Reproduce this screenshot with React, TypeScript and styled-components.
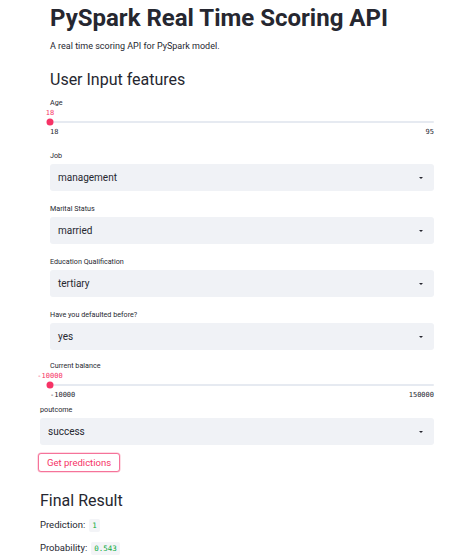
import styled, { createGlobalStyle } from "styled-components";

const primary = "#f63366";
const textColor = "#262730";

const GlobalStyle = createGlobalStyle`
    body {
        margin: 0;
        background: #ffffff;
        color: ${textColor};
        font-family: Roboto, "Noto Sans", sans-serif;
    }
`;

const Page = styled.div`
    padding: 4px 26px 0 40px;
`;

const Inner = styled.div`
    padding-left: 10px;
`;

const Title = styled.h1`
    margin: 0;
    font-size: 24px;
    line-height: 28px;
    font-weight: 700;
`;

const Subtitle = styled.p`
    margin: 7px 0 0;
    font-size: 9px;
    line-height: 14px;
`;

const SectionTitle = styled.h2<{ $top: number }>`
    margin: ${(p) => p.$top}px 0 0;
    font-size: 16px;
    line-height: 22px;
    font-weight: 400;
`;

const Label = styled.div`
    font-size: 7.2px;
    line-height: 12px;
`;

const SliderBlock = styled.div<{ $top: number }>`
    margin-top: ${(p) => p.$top}px;
`;

const ValueRow = styled.div`
    position: relative;
    height: 9px;
`;

const ThumbValue = styled.span`
    position: absolute;
    top: 0;
    transform: translateX(-50%);
    font-family: "DejaVu Sans Mono", monospace;
    font-size: 7px;
    line-height: 9px;
    color: ${primary};
    white-space: nowrap;
`;

const Track = styled.div`
    position: relative;
    height: 8px;
    display: flex;
    align-items: center;
    &::before {
        content: "";
        flex: 1;
        height: 2px;
        border-radius: 1px;
        background: #e6eaf1;
    }
`;

const Thumb = styled.span`
    position: absolute;
    top: 50%;
    width: 7px;
    height: 7px;
    border-radius: 50%;
    background: ${primary};
    transform: translate(-50%, -50%);
`;

const Ticks = styled.div`
    display: flex;
    justify-content: space-between;
    font-family: "DejaVu Sans Mono", monospace;
    font-size: 7px;
    line-height: 12px;
    color: ${textColor};
`;

const Field = styled.div<{ $top: number }>`
    margin-top: ${(p) => p.$top}px;
`;

const Select = styled.div`
    margin-top: 2px;
    height: 27px;
    box-sizing: border-box;
    padding: 0 11px 0 8px;
    display: flex;
    align-items: center;
    justify-content: space-between;
    background: #f0f2f6;
    border-radius: 3px;
    font-size: 10px;
`;

const Caret = styled.span`
    width: 0;
    height: 0;
    border-left: 2px solid transparent;
    border-right: 2px solid transparent;
    border-top: 2.5px solid ${textColor};
`;

const Button = styled.button`
    margin-top: 8px;
    margin-left: -2px;
    height: 19px;
    padding: 0 8px;
    background: #ffffff;
    border: 1.5px solid #f5739a;
    border-radius: 3px;
    box-shadow: 0 0 0 0.5px rgba(246, 51, 102, 0.35);
    color: ${primary};
    font-family: inherit;
    font-size: 9.5px;
    line-height: 16px;
`;

const ResultRow = styled.div<{ $top: number }>`
    margin-top: ${(p) => p.$top}px;
    display: flex;
    align-items: center;
    gap: 4px;
    font-size: 9.5px;
    line-height: 14px;
`;

const Code = styled.code`
    padding: 1px 3px;
    border-radius: 2px;
    background: #f3f4f7;
    color: #09ab3b;
    font-family: "DejaVu Sans Mono", monospace;
    font-size: 7.5px;
    line-height: 11px;
`;

interface SliderProps {
    label: string;
    min: number;
    max: number;
    value: number;
    top: number;
}

function Slider({ label, min, max, value, top }: SliderProps) {
    const pct = ((value - min) / (max - min)) * 100;
    return (
        <SliderBlock $top={top}>
            <Label>{label}</Label>
            <ValueRow>
                <ThumbValue style={{ left: `${pct}%` }}>{value}</ThumbValue>
            </ValueRow>
            <Track>
                <Thumb style={{ left: `${pct}%` }} />
            </Track>
            <Ticks>
                <span>{min}</span>
                <span>{max}</span>
            </Ticks>
        </SliderBlock>
    );
}

function SelectField({ label, value, top }: { label: string; value: string; top: number }) {
    return (
        <Field $top={top}>
            <Label>{label}</Label>
            <Select>
                <span>{value}</span>
                <Caret />
            </Select>
        </Field>
    );
}

const fields = [
    { label: "Job", value: "management" },
    { label: "Marital Status", value: "married" },
    { label: "Education Qualification", value: "tertiary" },
    { label: "Have you defaulted before?", value: "yes" },
];

export default function App() {
    return (
        <>
            <GlobalStyle />
            <Page>
                <Inner>
                    <Title>PySpark Real Time Scoring API</Title>
                    <Subtitle>A real time scoring API for PySpark model.</Subtitle>
                    <SectionTitle $top={16}>User Input features</SectionTitle>
                    <Slider label="Age" min={18} max={95} value={18} top={6} />
                    {fields.map((f) => (
                        <SelectField key={f.label} label={f.label} value={f.value} top={12} />
                    ))}
                    <Slider label="Current balance" min={-10000} max={150000} value={-10000} top={10} />
                </Inner>
                <SelectField label="poutcome" value="success" top={3} />
                <Button>Get predictions</Button>
                <SectionTitle $top={18}>Final Result</SectionTitle>
                <ResultRow $top={6}>
                    Prediction: <Code>1</Code>
                </ResultRow>
                <ResultRow $top={9}>
                    Probability: <Code>0.543</Code>
                </ResultRow>
            </Page>
        </>
    );
}
